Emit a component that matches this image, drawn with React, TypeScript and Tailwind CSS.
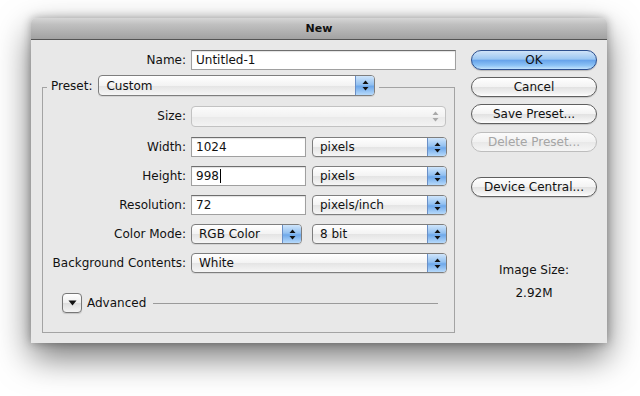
import React from "react";

const Arrows = ({ color = "#111" }: { color?: string }) => (
  <svg width="7" height="11" viewBox="0 0 7 11">
    <path d="M3.5 0.5 L6.5 4 L0.5 4 Z" fill={color} />
    <path d="M3.5 10.5 L6.5 7 L0.5 7 Z" fill={color} />
  </svg>
);

function Popup({ label, className = "", disabled = false }: { label: string; className?: string; disabled?: boolean }) {
  if (disabled) {
    return (
      <div
        className={`h-[21px] flex rounded-[4px] border border-[#c2c2c2] bg-[linear-gradient(#fbfbfb,#f2f2f2_50%,#e9e9e9_51%,#f3f3f3)] overflow-hidden ${className}`}
      >
        <div className="flex-1" />
        <div className="w-[19px] flex items-center justify-center">
          <Arrows color="#a9a9a9" />
        </div>
      </div>
    );
  }
  return (
    <div
      className={`h-[20px] flex rounded-[4px] border border-[#7e7e7e] bg-[linear-gradient(#ffffff,#f3f3f3_50%,#e4e4e4_51%,#f6f6f6)] overflow-hidden shadow-[0_1px_0_rgba(0,0,0,0.08)] ${className}`}
    >
      <div className="flex-1 flex items-center pl-[7px] text-[12px] leading-none text-[#111]">{label}</div>
      <div className="w-[19px] flex items-center justify-center border-l border-[#6a8fc6] bg-[linear-gradient(#cfe5fb,#93c1f1_45%,#6ea8ea_55%,#b7dafb)]">
        <Arrows />
      </div>
    </div>
  );
}

function TextField({ value, className = "", cursor = false }: { value: string; className?: string; cursor?: boolean }) {
  return (
    <div
      className={`h-[20px] flex items-center bg-white border border-[#a0a0a0] border-t-[#6e6e6e] pl-[4px] text-[12px] leading-none text-[#111] shadow-[inset_0_1px_1px_rgba(0,0,0,0.12)] ${className}`}
    >
      {value}
      {cursor && <span className="inline-block w-[1px] h-[14px] bg-black ml-[1px]" />}
    </div>
  );
}

function Button({ label, primary = false, disabled = false, className = "" }: { label: string; primary?: boolean; disabled?: boolean; className?: string }) {
  const base = "w-[126px] h-[20px] rounded-full flex items-center justify-center text-[12px] leading-none";
  if (primary)
    return (
      <div
        className={`${base} border border-[#2c4f8f] text-[#111] bg-[linear-gradient(#cfe3f8,#9cc7f3_45%,#67a3ea_52%,#8cc2f5_80%,#c3e3fc)] shadow-[0_1px_1px_rgba(0,0,0,0.2)] ${className}`}
      >
        {label}
      </div>
    );
  if (disabled)
    return (
      <div
        className={`${base} border border-[#bdbdbd] text-[#a5a5a5] bg-[linear-gradient(#fbfbfb,#f1f1f1_50%,#e8e8e8_52%,#f5f5f5)] ${className}`}
      >
        {label}
      </div>
    );
  return (
    <div
      className={`${base} border border-[#5f5f5f] text-[#111] bg-[linear-gradient(#ffffff,#f3f3f3_48%,#e2e2e2_52%,#f2f2f2_85%,#ffffff)] shadow-[0_1px_1px_rgba(0,0,0,0.15)] ${className}`}
    >
      {label}
    </div>
  );
}

function Row({ label, children, className = "" }: { label: string; children: React.ReactNode; className?: string }) {
  return (
    <div className={`flex items-center h-[20px] ${className}`}>
      <div className="w-[143px] text-right text-[12px] leading-none text-[#111]">{label}</div>
      <div className="ml-[5px] flex items-center">{children}</div>
    </div>
  );
}

export default function App() {
  return (
    <div
      className="w-[640px] h-[396px] bg-white pt-[18px] pl-[31px] overflow-hidden"
      style={{ fontFamily: '"DejaVu Sans", sans-serif' }}
    >
      <div className="w-[576px] h-[325px] bg-[#e8e8e8] rounded-t-[5px] flex flex-col shadow-[0_14px_34px_rgba(0,0,0,0.55),0_0_10px_rgba(0,0,0,0.3)]">
        {/* Title bar */}
        <div className="h-[22px] rounded-t-[5px] border-b border-[#545454] bg-[linear-gradient(#d6d6d6,#c0c0c0_30%,#a2a2a2)] flex items-center justify-center">
          <span className="text-[11px] font-bold leading-none text-[#111]">New</span>
        </div>

        {/* Body */}
        <div className="flex pl-[11px] pt-[10px]">
          {/* Left column */}
          <div className="w-[414px] flex flex-col">
            <div className="flex items-center h-[20px]">
              <div className="w-[144px] text-right text-[12px] leading-none text-[#111]">Name:</div>
              <TextField value="Untitled-1" className="ml-[5px] w-[265px]" />
            </div>

            <div className="mt-[17px] w-[413px] h-[246px] border border-[#a3a3a3] flex flex-col">
              <div className="-mt-[13px] h-[21px] flex">
                <div className="ml-[4px] px-[4px] bg-[#e8e8e8] flex items-center">
                  <span className="text-[12px] leading-none text-[#111]">Preset:</span>
                  <Popup label="Custom" className="ml-[6px] w-[277px] h-[21px]" />
                </div>
              </div>

              <Row label="Size:" className="mt-[10px]">
                <Popup label="" disabled className="w-[255px]" />
              </Row>
              <Row label="Width:" className="mt-[11px]">
                <TextField value="1024" className="w-[115px]" />
                <Popup label="pixels" className="ml-[6px] w-[135px]" />
              </Row>
              <Row label="Height:" className="mt-[9px]">
                <TextField value="998" cursor className="w-[115px]" />
                <Popup label="pixels" className="ml-[6px] w-[135px]" />
              </Row>
              <Row label="Resolution:" className="mt-[9px]">
                <TextField value="72" className="w-[115px]" />
                <Popup label="pixels/inch" className="ml-[6px] w-[135px]" />
              </Row>
              <Row label="Color Mode:" className="mt-[9px]">
                <Popup label="RGB Color" className="w-[111px]" />
                <Popup label="8 bit" className="ml-[10px] w-[135px]" />
              </Row>
              <Row label="Background Contents:" className="mt-[9px]">
                <Popup label="White" className="w-[256px]" />
              </Row>

              <div className="mt-[20px] h-[20px] flex items-center">
                <div className="ml-[19px] w-[20px] h-[20px] rounded-[4px] border border-[#777] bg-[linear-gradient(#ffffff,#eeeeee_50%,#dddddd_52%,#f4f4f4)] flex items-center justify-center shadow-[0_1px_1px_rgba(0,0,0,0.15)]">
                  <svg width="9" height="6" viewBox="0 0 9 6">
                    <path d="M0.5 0.5 L8.5 0.5 L4.5 5.5 Z" fill="#111" />
                  </svg>
                </div>
                <span className="ml-[5px] text-[12px] leading-none text-[#111]">Advanced</span>
                <div className="flex-1 ml-[7px] mr-[16px] h-[1px] bg-[#9a9a9a]" />
              </div>
            </div>
          </div>

          {/* Right column */}
          <div className="ml-[15px] w-[126px] flex flex-col">
            <Button label="OK" primary />
            <Button label="Cancel" className="mt-[7px]" />
            <Button label="Save Preset..." className="mt-[7px]" />
            <Button label="Delete Preset..." disabled className="mt-[8px]" />
            <Button label="Device Central..." className="mt-[25px]" />
            <div className="mt-[65px] h-[16px] flex items-center justify-center text-[12px] leading-none text-[#111]">Image Size:</div>
            <div className="mt-[7px] h-[16px] flex items-center justify-center text-[12px] leading-none text-[#111]">2.92M</div>
          </div>
        </div>
      </div>
    </div>
  );
}
